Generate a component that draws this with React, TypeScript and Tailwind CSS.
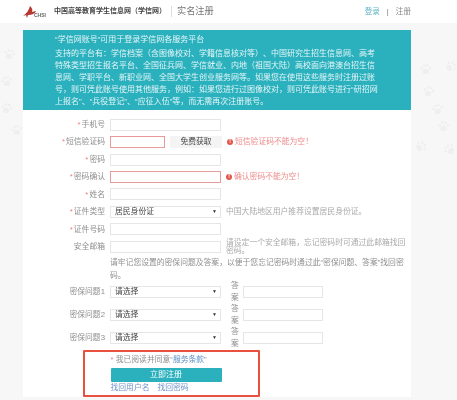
import React from 'react';

const FONT = "font-['Liberation_Sans','Noto_Sans_CJK_SC',sans-serif] [text-spacing-trim:space-all]";

const Label = ({ text, required = true }: { text: string; required?: boolean }) => (
  <div className="w-[82px] shrink-0 whitespace-nowrap text-right text-[7.8px] text-[#8f8f8f]">
    {required && <span className="mr-[1px] text-[#ef7f7f]">*</span>}
    {text}
  </div>
);

const Field = ({ w = 'w-[111px]', error = false }: { w?: string; error?: boolean }) => (
  <div className={`h-[12px] ${w} shrink-0 border bg-white ${error ? 'border-[#e79a9a]' : 'border-[#e6e6e6]'}`} />
);

const Select = ({ text }: { text: string }) => (
  <div className="flex h-[12px] w-[111px] shrink-0 items-center justify-between border border-[#e6e6e6] bg-white pl-[4px] pr-[3px] text-[7.8px] text-[#444]">
    <span>{text}</span>
    <span className="text-[5px] text-[#333]">▼</span>
  </div>
);

const Error = ({ text }: { text: string }) => (
  <div className="flex items-center gap-[2px] whitespace-nowrap text-[7.8px] text-[#ee8c8c]">
    <span className="flex h-[6px] w-[6px] items-center justify-center rounded-full bg-[#e2574c] text-[5px] font-bold text-white">!</span>
    {text}
  </div>
);

const Row = ({ children }: { children: React.ReactNode }) => (
  <div className="flex h-[17.45px] items-center gap-[5px]">{children}</div>
);

const Question = ({ n }: { n: number }) => (
  <div className="flex h-[23px] items-center gap-[5px]">
    <Label text={`密保问题${n}`} required={false} />
    <Select text="请选择" />
    <div className="ml-[5px] w-[8px] text-center text-[7.8px] leading-[12px] text-[#8f8f8f]">答案</div>
    <div className="-ml-[1px]"><Field w="w-[80px]" /></div>
  </div>
);

const Paw = ({ className }: { className: string }) => (
  <svg viewBox="0 0 20 20" className={`absolute h-[13px] w-[13px] text-[#efefef] ${className}`} fill="currentColor">
    <ellipse cx="10" cy="13" rx="5" ry="4" />
    <circle cx="4" cy="8" r="2" />
    <circle cx="8" cy="4" r="2" />
    <circle cx="13" cy="4" r="2" />
    <circle cx="17" cy="8" r="2" />
  </svg>
);

export default function App() {
  return (
    <div className={`${FONT} relative h-[400px] w-[457px] overflow-hidden bg-[#f7f7f7] blur-[0.6px]`}>
      <Paw className="left-[3px] top-[48px] rotate-12" />
      <Paw className="left-[0px] top-[75px] -rotate-12" />
      <Paw className="left-[0px] top-[102px] rotate-12" />
      <Paw className="left-[10px] top-[124px] -rotate-12" />
      <Paw className="left-[419px] top-[63px]" />
      <Paw className="left-[444px] top-[60px] rotate-45" />
      <Paw className="left-[422px] top-[85px] rotate-12" />
      <Paw className="left-[431px] top-[103px] -rotate-12" />
      <Paw className="left-[437px] top-[120px]" />
      <Paw className="left-[414px] top-[140px] rotate-45" />
      <Paw className="left-[443px] top-[143px] -rotate-45" />

      {/* header */}
      <header className="flex h-[23px] items-center bg-white pl-[23px] pr-[46px]">
        <svg viewBox="0 0 26 12" className="h-[12px] w-[26px] shrink-0">
          <path d="M0 10 C4 7 6 4 7 0 C9 2 10 4 9 6 L13 5 C12 8 8 9 5 9 L4 12 L3 9 Z" fill="#b8372f" />
          <text x="11" y="11" fontSize="5" fontWeight="700" fill="#666" fontFamily="Liberation Sans">CHSI</text>
        </svg>
        <span className="ml-[5px] whitespace-nowrap font-['Liberation_Serif','Noto_Sans_CJK_SC',serif] text-[7px] font-bold text-[#444]">中国高等教育学生信息网（学信网）</span>
        <div className="ml-[5px] h-[11px] w-px bg-[#ddd]" />
        <span className="ml-[5px] whitespace-nowrap text-[9.2px] text-[#777]">实名注册</span>
        <div className="ml-auto flex items-center gap-[7px] text-[7.6px]">
          <span className="text-[#5db3c4]">登录</span>
          <span className="text-[#777]">|</span>
          <span className="text-[#888]">注册</span>
        </div>
      </header>

      <main className="relative mx-[23px] mt-[7px] w-[388px] bg-white">
        {/* notice */}
        <section className="h-[80px] bg-[#2bb0bd] pl-[32px] pr-[30px] pt-[4px] text-[8px] leading-[12px] text-[#e3f6f8]">
          <p className="pb-[2px]">“学信网账号”可用于登录学信网各服务平台</p>
          <p>支持的平台有：学信档案（含图像校对、学籍信息核对等）、中国研究生招生信息网、高考特殊类型招生报名平台、全国征兵网、学信就业、内地（祖国大陆）高校面向港澳台招生信息网、学职平台、新职业网、全国大学生创业服务网等。如果您在使用这些服务时注册过账号，则可凭此账号使用其他服务，例如：如果您进行过图像校对，则可凭此账号进行“研招网上报名”、“兵役登记”、“应征入伍”等，而无需再次注册账号。</p>
        </section>

        {/* form */}
        <section className="pt-[6px]">
          <Row><Label text="手机号" /><Field /></Row>
          <Row>
            <Label text="短信验证码" />
            <Field w="w-[55px]" error />
            <div className="flex h-[12px] w-[52px] items-center justify-center bg-[#f4f4f4] text-[7.8px] text-[#444]">免费获取</div>
            <Error text="短信验证码不能为空！" />
          </Row>
          <Row><Label text="密码" /><Field /></Row>
          <Row><Label text="密码确认" /><Field error /><Error text="确认密码不能为空！" /></Row>
          <Row><Label text="姓名" /><Field /></Row>
          <Row>
            <Label text="证件类型" />
            <Select text="居民身份证" />
            <span className="whitespace-nowrap text-[7.8px] text-[#aaa]">中国大陆地区用户推荐设置居民身份证。</span>
          </Row>
          <Row><Label text="证件号码" /><Field /></Row>
          <Row>
            <Label text="安全邮箱" required={false} />
            <Field />
            <span className="w-[183px] text-[7.8px] leading-[8px] text-[#aaa]">请设定一个安全邮箱，忘记密码时可通过此邮箱找回密码。</span>
          </Row>
          <p className="ml-[87px] h-[25px] w-[300px] text-[7.8px] leading-[13px] text-[#8f8f8f]">请牢记您设置的密保问题及答案，以便于您忘记密码时通过此“密保问题、答案”找回密码。</p>
          <Question n={1} />
          <Question n={2} />
          <Question n={3} />

          {/* agree box */}
          <div className="ml-[60px] h-[47px] w-[177px] rounded-[1px] border-2 border-[#e8503f] pl-[25.5px] pt-[2.5px]">
            <p className="whitespace-nowrap text-[7.8px] leading-[12px] text-[#8f8f8f]">
              <span className="text-[#ef7f7f]">*</span> 我已阅读并同意“<span className="text-[#5b8fc7]">服务条款</span>”
            </p>
            <div className="mt-[2px] flex h-[14px] w-[111px] items-center justify-center rounded-[1px] bg-[#2bb0bd] text-[8px] text-white">立即注册</div>
            <div className="mt-[1px] flex gap-[8px] text-[7.8px] leading-[10px] text-[#6f94c9]">
              <span>找回用户名</span>
              <span>找回密码</span>
            </div>
          </div>
        </section>
      </main>
    </div>
  );
}
